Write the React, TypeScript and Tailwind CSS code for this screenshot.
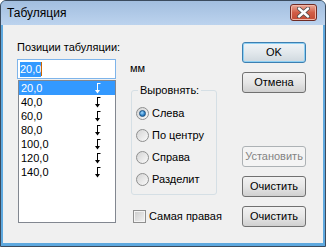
import React from "react";

const tabs = ["20,0", "40,0", "60,0", "80,0", "100,0", "120,0", "140,0"];
const aligns = ["Слева", "По центру", "Справа", "Разделит"];

function TabMark({ white }: { white?: boolean }) {
  const c = white ? "#ffffff" : "#000000";
  return (
    <svg width="7" height="12" viewBox="0 0 7 12" className="block">
      <path d="M3.5 1.5H6.5M3.5 1V10.5" stroke={c} strokeWidth="1" fill="none" />
      <path d="M1 8L3.5 11.5L6 8Z" fill={c} />
    </svg>
  );
}

function Radio({ checked, label }: { checked?: boolean; label: string }) {
  return (
    <div className="flex h-[22px] items-center whitespace-nowrap">
      <span className="flex h-[13px] w-[13px] shrink-0 items-center justify-center rounded-full border border-[#8e8f8f] bg-gradient-to-br from-[#d4d4d4] to-[#fafafa]">
        {checked && (
          <span className="h-[7px] w-[7px] rounded-full border border-[#1c5180] bg-[radial-gradient(circle_at_40%_35%,#a6dcff,#2a7fc6_60%,#1d5f99)]" />
        )}
      </span>
      <span className="ml-[3px]">{label}</span>
    </div>
  );
}

function Button({ children, primary, disabled, className = "" }: { children: React.ReactNode; primary?: boolean; disabled?: boolean; className?: string }) {
  let look = "border-[#707070] bg-gradient-to-b from-[#f2f2f2] via-[#e6e6e6] to-[#d0d0d0] text-black";
  if (primary) look = "border-[#3c7fb1] bg-gradient-to-b from-[#f0f4f7] via-[#e2e8ec] to-[#cfd8de] text-black shadow-[inset_0_0_0_1px_#8fd0f3]";
  if (disabled) look = "border-[#adb2b5] bg-[#f4f4f4] text-[#838383]";
  return (
    <div className={`flex h-[21px] w-[64px] items-center justify-center whitespace-nowrap rounded-[3px] border ${look} ${className}`}>
      {children}
    </div>
  );
}

export default function App() {
  return (
    <div className="h-[247px] w-[326px] overflow-hidden font-['Liberation_Sans',sans-serif] text-[11px] leading-[15px] text-black">
      <div className="flex h-[247px] w-[326px] flex-col rounded-t-[6px] border border-[#3b4b5e] bg-[#5fa9df]">
        <div className="flex h-[24px] shrink-0 items-center justify-between rounded-t-[5px] bg-gradient-to-b from-[#a2bedf] to-[#bcd3ee] pl-[6px] pr-[8px]">
          <span className="text-[12px]">Табуляция</span>
          <div className="mt-[-2px] flex h-[17px] w-[27px] items-center justify-center rounded-[3px] border border-[#6f2b24] bg-gradient-to-b from-[#e9a999] via-[#d15d46] to-[#c24a33] shadow-[inset_0_0_0_1px_#f1b7a8]">
            <svg width="13" height="11" viewBox="0 0 13 11">
              <path d="M2 1.5L11 9.5M11 1.5L2 9.5" stroke="#4a4a4a" strokeWidth="4" strokeLinecap="round" />
              <path d="M2 1.5L11 9.5M11 1.5L2 9.5" stroke="#ffffff" strokeWidth="2.4" strokeLinecap="round" />
            </svg>
          </div>
        </div>
        <div className="mx-[2px] flex h-[218px] shrink-0 items-start bg-[#f0f0f0] pl-[14px]">
          <div className="mt-[15px] w-[99px]">
            <div className="h-[15px] whitespace-nowrap">Позиции табуляции:</div>
            <div className="mt-[4px] flex h-[20px] items-center border border-[#7eb4ea] bg-white pl-[2px]">
              <span className="bg-[#3399ff] text-white">20,0</span>
              <span className="h-[14px] w-[1px] bg-[#cc6600]" />
            </div>
            <div className="ml-[1px] mt-[1px] h-[143px] border border-[#828790] bg-white">
              {tabs.map((t, i) => (
                <div key={t} className={`flex h-[14px] items-center justify-between pl-[2px] pr-[14px] leading-[14px] ${i === 0 ? "bg-[#3399ff] text-white" : ""}`}>
                  <span>{t}</span>
                  <TabMark white={i === 0} />
                </div>
              ))}
            </div>
          </div>
          <div className="ml-[11px] mt-[36px] w-[90px]">
            <div className="h-[14px] pl-[3px] text-[11px] leading-[14px]">мм</div>
            <div className="relative ml-[4px] mt-[15px] h-[105px] w-[86px] rounded-[3px] border border-[#d5dfe5] px-[4px] pt-[11px]">
              <span className="absolute left-[6px] top-[-8px] bg-[#f0f0f0] px-[2px]">Выровнять:</span>
              {aligns.map((a, i) => (
                <Radio key={a} label={a} checked={i === 0} />
              ))}
            </div>
            <div className="ml-[6px] mt-[14px] flex items-center whitespace-nowrap">
              <span className="h-[13px] w-[13px] shrink-0 border border-[#8f8f8f] bg-gradient-to-br from-[#cbcbcb] to-[#f4f4f4] shadow-[inset_0_0_0_1px_#f4f4f4]" />
              <span className="ml-[3px]">Самая правая</span>
            </div>
          </div>
          <div className="ml-[25px] mt-[17px] flex flex-col">
            <Button primary>OK</Button>
            <Button className="mt-[9px]">Отмена</Button>
            <Button disabled className="mt-[53px]">Установить</Button>
            <Button className="mt-[9px]">Очистить</Button>
            <Button className="mt-[9px]">Очистить</Button>
          </div>
        </div>
      </div>
    </div>
  );
}
